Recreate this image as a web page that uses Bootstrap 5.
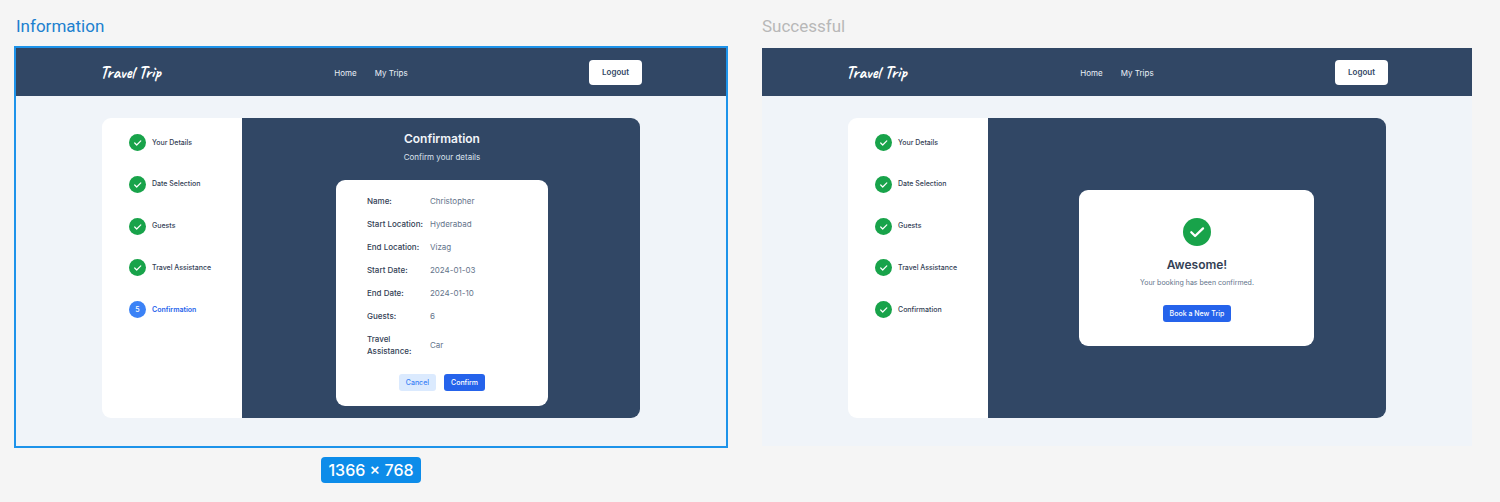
<!DOCTYPE html>
<html lang="en">
<head>
<meta charset="utf-8">
<meta name="viewport" content="width=device-width, initial-scale=1">
<title>Travel Trip</title>
<link href="https://cdn.jsdelivr.net/npm/bootstrap@5.3.0/dist/css/bootstrap.min.css" rel="stylesheet">
<style>
  :root { --navy: #314765; --ink: #334155; --green: #18a34a; --blue: #2563eb; }
  body { background: #f5f5f5; font-family: Inter, "Liberation Sans", sans-serif; font-size: 8px; line-height: 12px; color: var(--ink); }
  .board { padding: 14px 28px 18px 16px; gap: 36px; }
  .frame-col { flex: 1 1 0; min-width: 0; }
  .frame-label { font-family: Roboto, sans-serif; font-size: 17px; line-height: 24px; margin-bottom: 10px; color: #b8b8b8; font-weight: 400; }
  .frame-label.active { color: #2080cf; }
  .frame { background: #f0f4f9; padding-bottom: 28px; }
  .frame.selected { outline: 2px solid #1d93ea; }
  .topbar { background: var(--navy); display: grid; grid-template-columns: 1fr auto 1fr; align-items: center; padding: 12px 84px 11px; }
  .brand { font-family: Caveat, Lato, cursive; font-weight: 700; font-size: 17px; line-height: 20px; color: #fff; text-decoration: none; }
  .menu { gap: 18px; }
  .menu a { color: #e9eff7; text-decoration: none; }
  .logout { justify-self: end; line-height: 13px; font-weight: 600; color: var(--navy); background: #fff; border: 0; border-radius: 4px; padding: 6px 13px; }
  .panel { margin: 22px 86px 0; min-height: 300px; }
  .steps { background: #fff; flex: 0 0 26%; padding: 16px 0 0 27px; border-radius: 9px 0 0 9px; }
  .steps ol { height: 184px; }
  .step { gap: 6px; font-size: 7px; font-weight: 500; }
  .step.current { color: var(--blue); font-weight: 600; }
  .dot { width: 17px; height: 17px; border-radius: 50%; background: var(--green); color: #fff; }
  .current .dot { background: #3b82f6; font-weight: 500; }
  .stage { flex: 1 1 auto; background: var(--navy); border-radius: 0 9px 9px 0; padding-left: 2px; }
  .stage h1 { font-size: 12px; line-height: 18px; font-weight: 600; margin: 12px 0 3px; color: #f1f5f9; }
  .stage .sub { line-height: 13px; margin: 0 0 16px; color: #dbe3ee; }
  .stage.finished { padding-left: 20px; }
  .sheet { background: #fff; border-radius: 9px; }
  .details { width: 212px; padding: 15px 31px; }
  .details dl { display: grid; grid-template-columns: 59px 1fr; gap: 11px 4px; align-items: center; margin: 0 0 17px; }
  .details dt { font-weight: 500; }
  .details dd { margin: 0; color: #64748b; }
  .act { border: 0; border-radius: 3px; font-size: 7px; line-height: 11px; font-weight: 500; padding: 3px 7px; color: #fff; background: var(--blue); }
  .act.soft { background: #dbeafe; color: #3b82f6; }
  .done { width: 235px; padding: 28px 20px 24px; }
  .done .dot { width: 28px; height: 28px; margin-bottom: 11px; }
  .done h2 { font-size: 12px; line-height: 16px; font-weight: 600; margin: 0 0 4px; }
  .done p { font-size: 7px; margin: 0 0 16px; color: #64748b; }
  .size-tag { background: #0d8ce9; color: #fff; border-radius: 4px; font-size: 16px; line-height: 20px; font-weight: 500; padding: 3px 7px; margin-top: 11px; }
</style>
</head>
<body>
<svg class="d-none" aria-hidden="true">
  <symbol id="check" viewBox="0 0 17 17"><path d="M5.7 9 7.7 11 11.8 6.9" fill="none" stroke="currentColor" stroke-width="1.2" stroke-linecap="round" stroke-linejoin="round"/></symbol>
  <symbol id="check-lg" viewBox="0 0 28 28"><path d="M8.3 14.2 12.1 18 20 10.4" fill="none" stroke="currentColor" stroke-width="2.3" stroke-linecap="round" stroke-linejoin="round"/></symbol>
</svg>
<main class="board d-flex align-items-start">
  <section class="frame-col d-flex flex-column align-items-stretch">
    <div class="frame-label active">Information</div>
    <div class="frame selected">
      <header class="topbar">
        <a class="brand" href="#">Travel Trip</a>
        <nav class="menu d-flex"><a href="#">Home</a><a href="#">My Trips</a></nav>
        <button class="logout" type="button">Logout</button>
      </header>
      <div class="panel d-flex">
        <aside class="steps">
          <ol class="list-unstyled d-flex flex-column justify-content-between mb-0">
            <li class="step d-flex align-items-center"><span class="dot"><svg class="d-block w-100 h-100"><use href="#check"/></svg></span>Your Details</li>
            <li class="step d-flex align-items-center"><span class="dot"><svg class="d-block w-100 h-100"><use href="#check"/></svg></span>Date Selection</li>
            <li class="step d-flex align-items-center"><span class="dot"><svg class="d-block w-100 h-100"><use href="#check"/></svg></span>Guests</li>
            <li class="step d-flex align-items-center"><span class="dot"><svg class="d-block w-100 h-100"><use href="#check"/></svg></span>Travel Assistance</li>
            <li class="step current d-flex align-items-center"><span class="dot d-flex align-items-center justify-content-center">5</span>Confirmation</li>
          </ol>
        </aside>
        <div class="stage d-flex flex-column align-items-center">
          <h1>Confirmation</h1>
          <p class="sub">Confirm your details</p>
          <div class="sheet details">
            <dl>
              <dt>Name:</dt><dd>Christopher</dd>
              <dt class="text-nowrap">Start Location:</dt><dd>Hyderabad</dd>
              <dt>End Location:</dt><dd>Vizag</dd>
              <dt>Start Date:</dt><dd>2024-01-03</dd>
              <dt>End Date:</dt><dd>2024-01-10</dd>
              <dt>Guests:</dt><dd>6</dd>
              <dt>Travel Assistance:</dt><dd>Car</dd>
            </dl>
            <div class="d-flex justify-content-center gap-2">
              <button class="act soft" type="button">Cancel</button>
              <button class="act" type="button">Confirm</button>
            </div>
          </div>
        </div>
      </div>
    </div>
    <div class="size-tag align-self-center">1366 × 768</div>
  </section>

  <section class="frame-col">
    <div class="frame-label">Successful</div>
    <div class="frame">
      <header class="topbar">
        <a class="brand" href="#">Travel Trip</a>
        <nav class="menu d-flex"><a href="#">Home</a><a href="#">My Trips</a></nav>
        <button class="logout" type="button">Logout</button>
      </header>
      <div class="panel d-flex">
        <aside class="steps">
          <ol class="list-unstyled d-flex flex-column justify-content-between mb-0">
            <li class="step d-flex align-items-center"><span class="dot"><svg class="d-block w-100 h-100"><use href="#check"/></svg></span>Your Details</li>
            <li class="step d-flex align-items-center"><span class="dot"><svg class="d-block w-100 h-100"><use href="#check"/></svg></span>Date Selection</li>
            <li class="step d-flex align-items-center"><span class="dot"><svg class="d-block w-100 h-100"><use href="#check"/></svg></span>Guests</li>
            <li class="step d-flex align-items-center"><span class="dot"><svg class="d-block w-100 h-100"><use href="#check"/></svg></span>Travel Assistance</li>
            <li class="step d-flex align-items-center"><span class="dot"><svg class="d-block w-100 h-100"><use href="#check"/></svg></span>Confirmation</li>
          </ol>
        </aside>
        <div class="stage finished d-flex align-items-center justify-content-center">
          <div class="sheet done d-flex flex-column align-items-center text-center">
            <span class="dot"><svg class="d-block w-100 h-100"><use href="#check-lg"/></svg></span>
            <h2>Awesome!</h2>
            <p>Your booking has been confirmed.</p>
            <button class="act" type="button">Book a New Trip</button>
          </div>
        </div>
      </div>
    </div>
  </section>
</main>
<script src="https://cdn.jsdelivr.net/npm/bootstrap@5.3.0/dist/js/bootstrap.bundle.min.js"></script>
</body>
</html>
